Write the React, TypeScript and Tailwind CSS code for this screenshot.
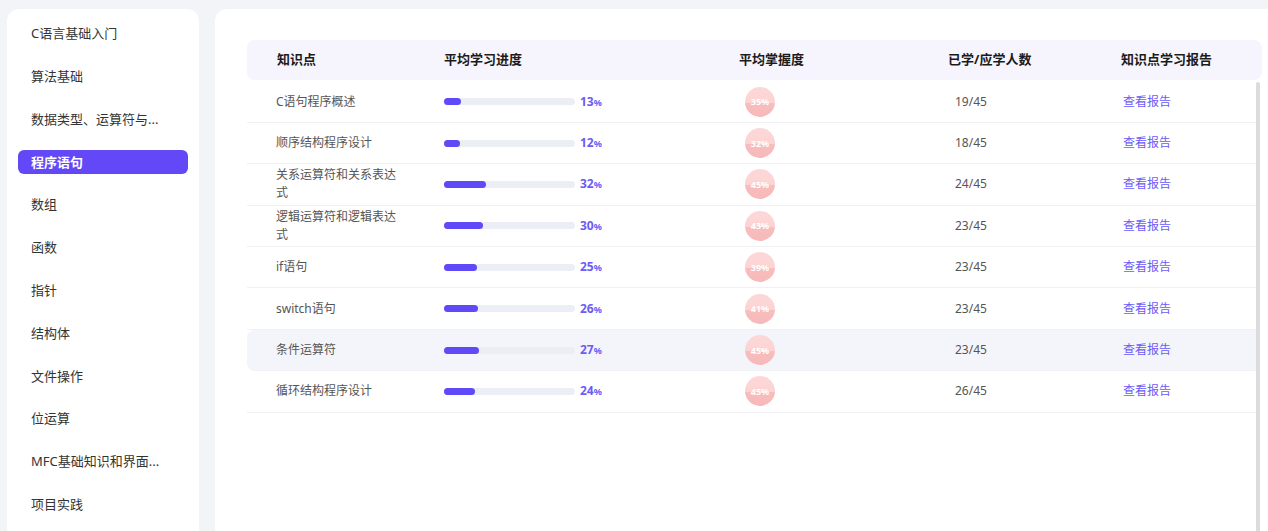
import type { ReactNode } from "react";

const FONT = { fontFamily: '"Noto Sans", "Noto Sans CJK SC", sans-serif' };

const menu = [
  "C语言基础入门",
  "算法基础",
  "数据类型、运算符与...",
  "程序语句",
  "数组",
  "函数",
  "指针",
  "结构体",
  "文件操作",
  "位运算",
  "MFC基础知识和界面...",
  "项目实践",
];

type Row = { name: string; progress: number; mastery: number; done: string };

const rows: Row[] = [
  { name: "C语句程序概述", progress: 13, mastery: 35, done: "19/45" },
  { name: "顺序结构程序设计", progress: 12, mastery: 32, done: "18/45" },
  { name: "关系运算符和关系表达式", progress: 32, mastery: 45, done: "24/45" },
  { name: "逻辑运算符和逻辑表达式", progress: 30, mastery: 43, done: "23/45" },
  { name: "if语句", progress: 25, mastery: 39, done: "23/45" },
  { name: "switch语句", progress: 26, mastery: 41, done: "23/45" },
  { name: "条件运算符", progress: 27, mastery: 45, done: "23/45" },
  { name: "循环结构程序设计", progress: 24, mastery: 45, done: "26/45" },
];

function Cols({ children, className }: { children: ReactNode[]; className: string }) {
  return (
    <div className={"grid grid-cols-[197px_276px_195px_182px_1fr] items-center " + className}>
      {children}
    </div>
  );
}

function Mastery({ value }: { value: number }) {
  return (
    <div className="w-[30px] h-[30px] rounded-full bg-[linear-gradient(#fdd8d8_0%,#fcd3d3_52%,#f8bdbe_52%,#f7b9ba_100%)] flex items-center justify-center">
      <span className="text-[9px] font-bold text-white leading-none">{value}%</span>
    </div>
  );
}

export default function App() {
  return (
    <div className="h-[531px] w-[1268px] overflow-hidden bg-[#f2f4f8] flex gap-4 pt-[9px] pl-[7px]" style={FONT}>
      <aside className="w-[192px] shrink-0 bg-white rounded-t-xl pt-[13px] px-[11px] flex flex-col gap-[18.8px]">
        {menu.map((m, i) => (
          <div
            key={m}
            className={
              "h-6 rounded-md px-[13px] flex items-center text-[13px] whitespace-nowrap " +
              (i === 3 ? "bg-[#6248f6] text-white font-bold" : "text-[#333]")
            }
          >
            {m}
          </div>
        ))}
      </aside>

      <main className="flex-1 bg-white rounded-tl-xl pt-[31px] pl-8 pr-[6px]">
        <Cols className="h-10 bg-[#f6f5fe] rounded-lg text-[13px] font-bold text-[#1b1b1b]">
          <div className="pl-[30px]">知识点</div>
          <div>平均学习进度</div>
          <div className="pl-[19px]">平均掌握度</div>
          <div className="pl-[33px]">已学/应学人数</div>
          <div className="pl-[24px]">知识点学习报告</div>
        </Cols>
        <div className="relative pr-[6px] pt-[1.5px]">
          <div className="absolute right-[2px] top-[2px] w-[4px] h-[460px] rounded-full bg-[#dcdcde]" />
          {rows.map((r, i) => (
            <Cols
              key={r.name}
              className={
                "h-[41.4px] text-[12px] text-[#555] border-b border-[#f1f1f3] " +
                (i === 6 ? "bg-[#f4f5fa] rounded-l-lg" : "")
              }
            >
              <div className="pl-[29px] pr-[44px] leading-[18px]">{r.name}</div>
              <div className="flex items-center">
                <div className="w-[131px] h-[7px] rounded-full bg-[#eceef5]">
                  <div className="h-full rounded-full bg-[#6049f6]" style={{ width: `${r.progress}%` }} />
                </div>
                <span className="ml-[5px] text-[12px] font-bold text-[#6b5cf7]">
                  {r.progress}
                  <span className="text-[9px]">%</span>
                </span>
              </div>
              <div className="pl-[25px]">
                <Mastery value={r.mastery} />
              </div>
              <div className="pl-[40px]">{r.done}</div>
              <div className="pl-[26px] text-[#6b5cf7]">查看报告</div>
            </Cols>
          ))}
        </div>
      </main>
    </div>
  );
}
